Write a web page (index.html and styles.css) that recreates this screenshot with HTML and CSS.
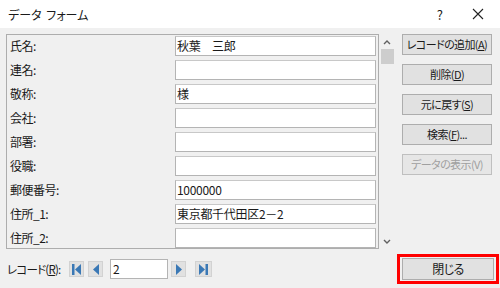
FILE: index.html
```html
<!DOCTYPE html>
<html lang="ja">
<head>
    <meta charset="UTF-8">
    <title>データ フォーム</title>
    <link rel="stylesheet" href="styles.css">
</head>
<body>
    <div class="titlebar">
        <span class="title">データ フォーム</span>
        <span class="help">?</span>
        <svg class="close-x" width="12" height="12" viewBox="0 0 12 12">
            <path d="M1 1 L11 11 M11 1 L1 11" stroke="#222" stroke-width="1.1" fill="none"/>
        </svg>
    </div>

    <div class="main">
        <div class="fields">
            <div class="row"><label>氏名:</label><div class="field">秋葉　三郎</div></div>
            <div class="row"><label>連名:</label><div class="field"></div></div>
            <div class="row"><label>敬称:</label><div class="field">様</div></div>
            <div class="row"><label>会社:</label><div class="field"></div></div>
            <div class="row"><label>部署:</label><div class="field"></div></div>
            <div class="row"><label>役職:</label><div class="field"></div></div>
            <div class="row"><label>郵便番号:</label><div class="field">1000000</div></div>
            <div class="row"><label>住所_1:</label><div class="field">東京都千代田区2－2</div></div>
            <div class="row"><label>住所_2:</label><div class="field"></div></div>
        </div>
        <div class="scrollbar">
            <svg class="arrow" width="8" height="6" viewBox="0 0 8 6"><path d="M1 5 L4 2 L7 5" stroke="#606060" stroke-width="1.4" fill="none"/></svg>
            <div class="thumb"></div>
            <div class="track"></div>
            <svg class="arrow" width="8" height="6" viewBox="0 0 8 6"><path d="M1 1 L4 4 L7 1" stroke="#606060" stroke-width="1.4" fill="none"/></svg>
        </div>
        <div class="actions">
            <button>レコードの追加(<u>A</u>)</button>
            <button>削除(<u>D</u>)</button>
            <button>元に戻す(<u>S</u>)</button>
            <button>検索(<u>F</u>)...</button>
            <button class="disabled">データの表示(V)</button>
        </div>
    </div>

    <div class="footer">
        <span class="rec-label">レコード(<u>R</u>):</span>
        <div class="nav-btn first">
            <svg width="11" height="11" viewBox="0 0 11 11"><rect x="1" y="0" width="2.5" height="11" fill="#3a78b5"/><path d="M10 0 L4 5.5 L10 11 Z" fill="#3a78b5"/></svg>
        </div>
        <div class="nav-btn prev">
            <svg width="8" height="11" viewBox="0 0 8 11"><path d="M7 0 L1 5.5 L7 11 Z" fill="#3a78b5"/></svg>
        </div>
        <div class="rec-input">2</div>
        <div class="nav-btn next">
            <svg width="8" height="11" viewBox="0 0 8 11"><path d="M1 0 L7 5.5 L1 11 Z" fill="#3a78b5"/></svg>
        </div>
        <div class="nav-btn last">
            <svg width="11" height="11" viewBox="0 0 11 11"><path d="M1 0 L7 5.5 L1 11 Z" fill="#3a78b5"/><rect x="7.5" y="0" width="2.5" height="11" fill="#3a78b5"/></svg>
        </div>
        <div class="close-wrap">
            <button class="close-btn">閉じる</button>
        </div>
    </div>
</body>
</html>
```

FILE: styles.css
```css
body {
    margin: 0;
    width: 500px;
    height: 288px;
    overflow: hidden;
    background-color: #f0f0f0;
    font-family: "Noto Sans CJK JP", "Noto Sans", sans-serif;
    font-feature-settings: "palt";
    font-size: 12px;
    color: #1a1a1a;
    white-space: nowrap;
}

.titlebar {
    height: 28px;
    background-color: #fff;
    display: flex;
    align-items: center;
}

.title {
    margin-left: 8px;
    font-size: 12px;
    word-spacing: 2px;
}

.help {
    margin-left: auto;
    margin-right: 29px;
    font-size: 13px;
}

.close-x {
    margin-right: 16px;
}

.main {
    display: flex;
    padding-top: 6px;
    padding-left: 6px;
    height: 216px;
}

.fields {
    box-sizing: border-box;
    width: 373px;
    height: 215px;
    border: 1px solid #adadad;
    padding-top: 1px;
    display: flex;
    flex-direction: column;
    gap: 4px;
}

.row {
    display: flex;
    align-items: center;
    height: 20px;
}

.row label {
    width: 165px;
    padding-left: 3px;
    line-height: 20px;
    letter-spacing: -0.5px;
}

.field {
    box-sizing: border-box;
    width: 201px;
    height: 20px;
    background-color: #fff;
    border: 1px solid #b4b4b4;
    border-top-color: #c8c8c8;
    padding-left: 1px;
    line-height: 18px;
    letter-spacing: -0.3px;
}

.scrollbar {
    width: 15px;
    height: 215px;
    display: flex;
    flex-direction: column;
    align-items: center;
}

.scrollbar .arrow {
    margin-top: 5px;
    margin-bottom: 4px;
}

.thumb {
    width: 13px;
    height: 15px;
    background-color: #cdcdcd;
    margin-left: 2px;
}

.track {
    flex: 1;
}

.actions {
    margin-left: 8px;
    display: flex;
    flex-direction: column;
    gap: 9px;
}

button {
    box-sizing: border-box;
    width: 90px;
    height: 21px;
    padding: 0;
    font-family: inherit;
    font-feature-settings: "palt";
    font-size: 11px;
    line-height: 19px;
    letter-spacing: -0.6px;
    color: #1a1a1a;
    background-color: #e1e1e1;
    border: 1px solid #adadad;
    white-space: nowrap;
}

button.disabled {
    color: #a0a0a0;
    border-color: #bfbfbf;
    background-color: #e6e6e6;
}

.footer {
    display: flex;
    align-items: center;
    height: 38px;
    padding-left: 7px;
}

.rec-label {
    width: 62px;
    font-size: 11.5px;
    letter-spacing: -0.8px;
}

.nav-btn {
    box-sizing: border-box;
    width: 15px;
    height: 16px;
    background-color: #e1e1e1;
    border: 1px solid #d2d2d2;
    display: flex;
    align-items: center;
    justify-content: center;
}

.prev {
    margin-left: 4px;
}

.rec-input {
    box-sizing: border-box;
    width: 58px;
    height: 20px;
    margin-left: 7px;
    background-color: #fff;
    border: 1px solid #b4b4b4;
    padding-left: 2px;
    line-height: 18px;
}

.next {
    margin-left: 3px;
}

.last {
    margin-left: 9px;
    width: 17px;
}

.close-wrap {
    margin-left: auto;
    margin-right: 1px;
    border: 3px solid #ff0000;
    width: 102px;
    height: 30px;
    box-sizing: border-box;
    padding: 1px 2px;
}

.close-btn {
    width: 100%;
    height: 100%;
    font-size: 12px;
    line-height: 20px;
}
```
